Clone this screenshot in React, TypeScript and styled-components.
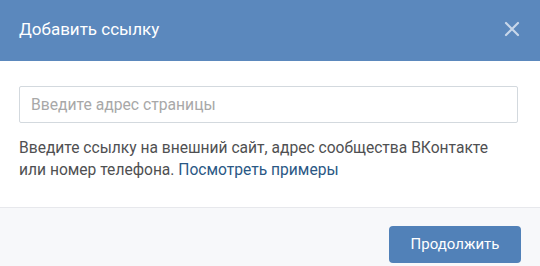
import React from "react";
import styled, { createGlobalStyle } from "styled-components";

const Global = createGlobalStyle`
  html, body { margin: 0; padding: 0; background: #fff; }
  body { font-family: Roboto, "Open Sans", "DejaVu Sans", sans-serif; -webkit-font-smoothing: antialiased; }
  * { box-sizing: border-box; }
`;

const Box = styled.div`
  width: 540px;
  background: #fff;
  display: flex;
  flex-direction: column;
`;

const Header = styled.div`
  height: 61px;
  background: #5b88bd;
  display: flex;
  align-items: center;
  justify-content: space-between;
  padding: 0 18px 4px 19px;
`;

const Title = styled.div`
  color: #fff;
  font-size: 17px;
  font-weight: 400;
`;

const Close = styled.button`
  width: 20px;
  height: 20px;
  border: 0;
  padding: 0;
  background: transparent;
  display: flex;
  align-items: center;
  justify-content: center;
  cursor: pointer;
`;

const Body = styled.div`
  padding: 25px 22px 26px 19px;
`;

const Input = styled.input`
  width: 499px;
  height: 37px;
  border: 1px solid #d3d9de;
  border-radius: 2px;
  padding: 0 10px 1px 11px;
  font-family: inherit;
  font-size: 15.7px;
  color: #000;
  outline: none;
  caret-color: #000;
  &::placeholder { color: #a8a8a8; }
`;

const Help = styled.p`
  margin: 14px 0 0;
  font-size: 15.6px;
  line-height: 22px;
  color: #4f5052;
`;

const Link = styled.a`
  color: #2a5885;
  text-decoration: none;
`;

const Footer = styled.div`
  border-top: 1px solid #e7e8ec;
  background: #f7f8fa;
  padding: 18px 19px 20px;
  display: flex;
  justify-content: flex-end;
`;

const Button = styled.button`
  width: 132px;
  height: 37px;
  border: 0;
  border-radius: 4px;
  background: #5181b8;
  color: #fff;
  font-family: inherit;
  font-size: 15px;
  padding: 0 0 1px;
  cursor: pointer;
`;

export default function App() {
  return (
    <>
      <Global />
      <Box>
        <Header>
          <Title>Добавить ссылку</Title>
          <Close aria-label="Закрыть">
            <svg width="16" height="16" viewBox="0 0 16 16">
              <path d="M2 2 L14 14 M14 2 L2 14" stroke="#c8d7ea" strokeWidth="2.2" strokeLinecap="round" />
            </svg>
          </Close>
        </Header>
        <Body>
          <Input placeholder="Введите адрес страницы" autoFocus />
          <Help>
            Введите ссылку на внешний сайт, адрес сообщества ВКонтакте или номер телефона.{" "}
            <Link href="#">Посмотреть примеры</Link>
          </Help>
        </Body>
        <Footer>
          <Button>Продолжить</Button>
        </Footer>
      </Box>
    </>
  );
}
